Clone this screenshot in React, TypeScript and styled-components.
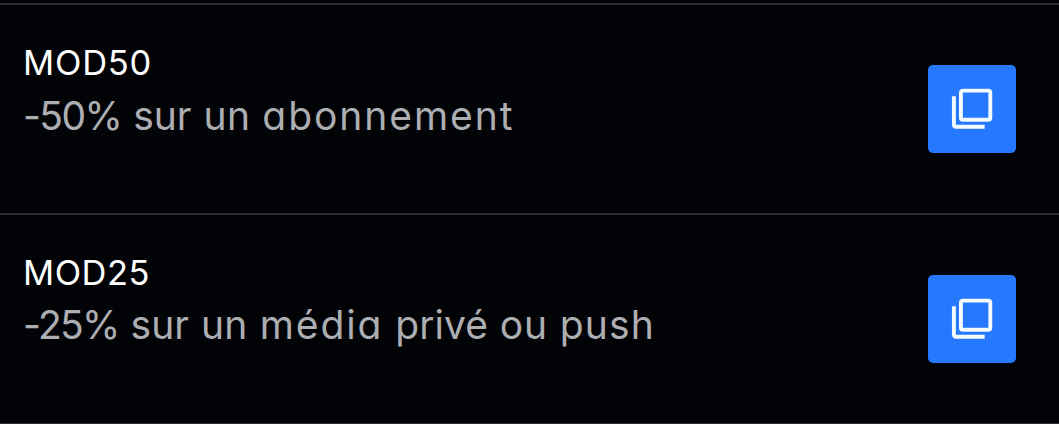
import React from 'react';
import styled, {createGlobalStyle} from "styled-components";

const promoCodes = [
    {
        code: "MOD50",
        tracking: 0.8,
        lineHeight: 56,
        words: [
            {text: "-50%", tracking: -1.6},
            {text: "sur", tracking: 0},
            {text: "un", tracking: 0.4},
            {text: "abonnement", tracking: 1.95},
        ],
    },
    {
        code: "MOD25",
        tracking: 0.5,
        lineHeight: 54,
        words: [
            {text: "-25%", tracking: -1.7},
            {text: "sur", tracking: 0},
            {text: "un", tracking: 0.4},
            {text: "média", tracking: 1.9},
            {text: "privé", tracking: 0},
            {text: "ou", tracking: 0.8},
            {text: "push", tracking: 1.1},
        ],
    },
];

const App = () => {
    return (
        <>
            <GlobalStyle/>
            <PromoList>
                {promoCodes.map((promo) => (
                    <PromoItem key={promo.code}>
                        <PromoInfo>
                            <Code $tracking={promo.tracking}>{promo.code}</Code>
                            <Description $lineHeight={promo.lineHeight}>
                                {promo.words.map((word, index) => (
                                    <React.Fragment key={word.text}>
                                        {index > 0 && " "}
                                        <Word $tracking={word.tracking}>{word.text}</Word>
                                    </React.Fragment>
                                ))}
                            </Description>
                        </PromoInfo>
                        <CopyButton type="button" aria-label="Copier">
                            <CopyIcon/>
                        </CopyButton>
                    </PromoItem>
                ))}
            </PromoList>
        </>
    );
};

const CopyIcon = () => (
    <svg width="42" height="42" viewBox="0 0 42 42" fill="none" stroke="#f3fbff" strokeWidth="3.9">
        <rect x="9.9" y="2.6" width="29.4" height="29.2" rx="2"/>
        <path d="M2.9 8.2V36.6Q2.9 38.8 5.1 38.8H33.7"/>
    </svg>
);

const GlobalStyle = createGlobalStyle`
  * {
    box-sizing: border-box;
    margin: 0;
    padding: 0;
  }

  body {
    background-color: #020307;
    font-family: "Inter", "Liberation Sans", sans-serif;
    font-feature-settings: "cv11";
    overflow: hidden;
  }
`

const PromoList = styled.ul`
  height: 424px;
  padding-top: 3px;
  list-style: none;
  overflow: hidden;

  &::after {
    content: "";
    display: block;
    height: 2px;
    background-color: #2b2c30;
  }
`

const PromoItem = styled.li`
  display: flex;
  justify-content: space-between;
  align-items: flex-start;
  height: 210px;
  padding: 30px 43px 0 23px;
  border-top: 2px solid #2b2c30;
`

const PromoInfo = styled.div`
  display: flex;
  flex-direction: column;
  padding-top: 1px;
`

const Code = styled.h3<{ $tracking: number }>`
  height: 52px;
  font-size: 34.5px;
  font-weight: 400;
  line-height: 54px;
  letter-spacing: ${props => props.$tracking}px;
  color: #ffffff;
`

const Description = styled.p<{ $lineHeight: number }>`
  font-size: 39px;
  font-weight: 400;
  line-height: ${props => props.$lineHeight}px;
  word-spacing: 1px;
  white-space: nowrap;
  color: #adaeb1;
`

const Word = styled.span<{ $tracking: number }>`
  letter-spacing: ${props => props.$tracking}px;
`

const CopyButton = styled.button`
  display: flex;
  justify-content: center;
  align-items: center;
  width: 88px;
  height: 88px;
  margin-top: 30px;
  border: none;
  border-radius: 5px;
  background-color: #2678ff;
`

export default App;
